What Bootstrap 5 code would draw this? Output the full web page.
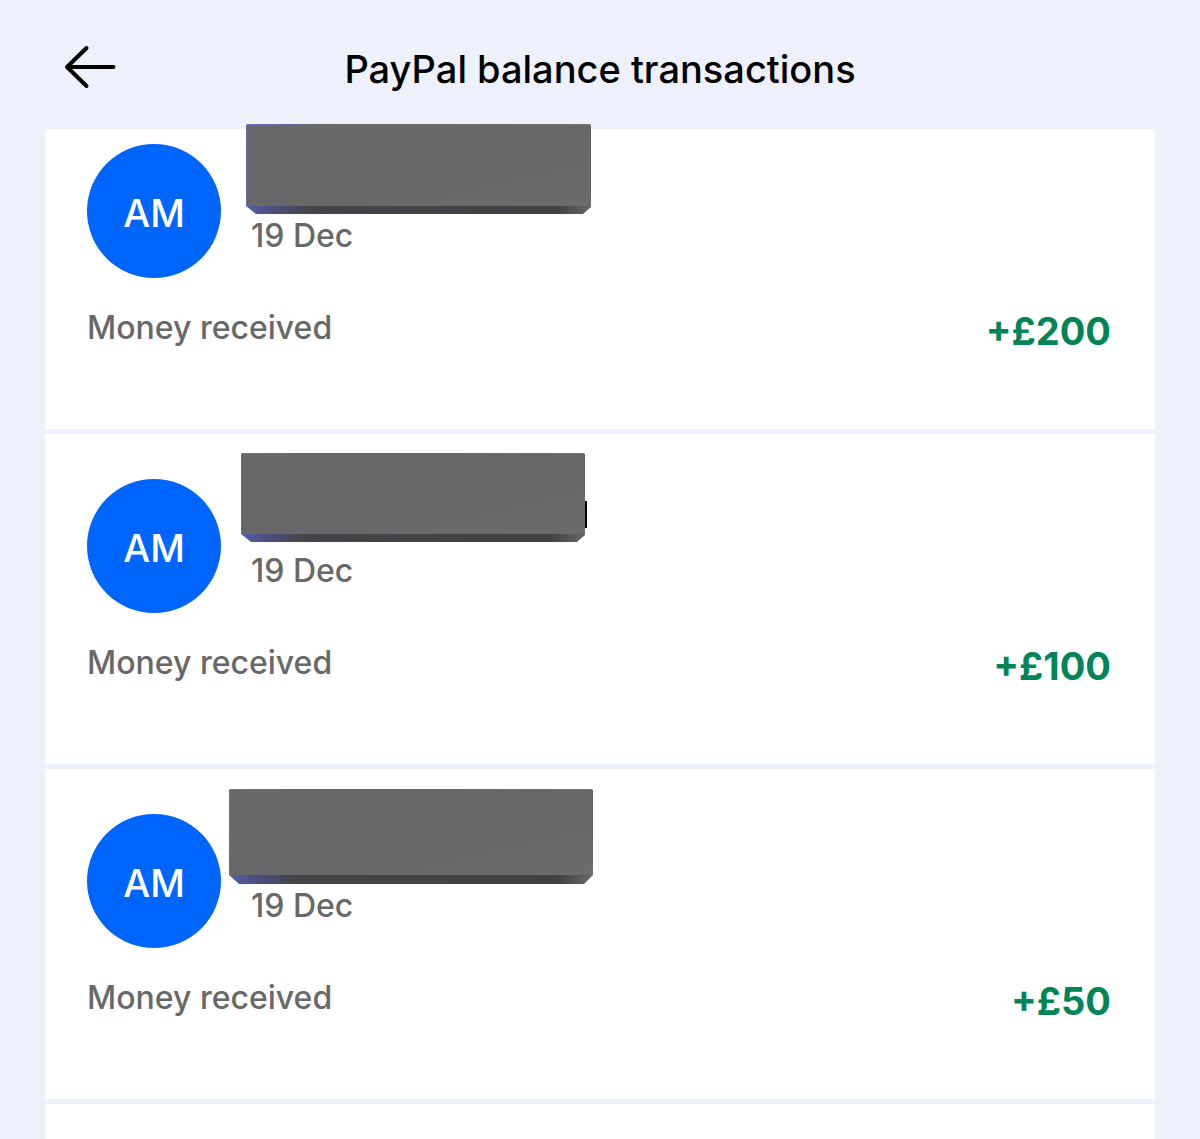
<!DOCTYPE html>
<html lang="en-GB">
<head>
<meta charset="utf-8">
<meta name="viewport" content="width=device-width, initial-scale=1">
<title>PayPal balance transactions</title>
<link rel="stylesheet" href="https://cdn.jsdelivr.net/npm/bootstrap@5.3.0/dist/css/bootstrap.min.css">
<style>
  body { background: #eef1fb; color: #000; font-family: Inter, "Liberation Sans", sans-serif; font-weight: 450; }
  .screen { min-height: 100vh; padding: 0 45px; }
  .topbar { display: grid; grid-template-columns: 60px 1fr 60px; height: 129px; padding: 0 12px; }
  .back-btn { width: 60px; height: 60px; margin-top: 37px; }
  .page-title { font-size: 38px; font-weight: 450; line-height: 48px; margin-top: 45px; }
  .tx-list { gap: 5px; }
  .tx { background: #fff; padding: 45px 44px 75px 42px; }
  .tx:first-child { padding-top: 15px; border-radius: 6px 6px 0 0; }
  .tx-next { min-height: 35px; padding: 0; }
  .avatar { width: 134px; height: 134px; background: #0066fb; font-size: 38px; line-height: 48px; padding-top: 4px; }
  .tx-head { gap: 30px; }
  .tx-date { font-size: 32px; line-height: 40px; color: #686868; padding-bottom: 22px; }
  .tx-foot { margin-top: 28px; line-height: 48px; }
  .tx-kind { font-size: 32px; line-height: 44px; color: #686868; }
  .tx-sum { font-size: 38px; line-height: 50px; margin-bottom: -2px; color: #018557; }
  /* Opaque bars that lie over the sender's name */
  .cover { position: absolute; overflow: visible; }
  .cover-a { left: 201px; top: -5px; }
  .cover-b { left: 196px; top: 18px; }
  .cover-c { left: 184px; top: 20px; }
</style>
<script src="https://cdn.jsdelivr.net/npm/bootstrap@5.3.0/dist/js/bootstrap.bundle.min.js"></script>
</head>
<body>
<svg width="0" height="0" class="position-absolute" aria-hidden="true">
  <defs>
    <linearGradient id="face" x1="0" y1="0" x2="1" y2="1">
      <stop offset="0" stop-color="#69696a"/><stop offset=".5" stop-color="#676769"/><stop offset="1" stop-color="#6b6b6d"/>
    </linearGradient>
    <linearGradient id="edge">
      <stop offset="0" stop-color="#5360a8"/><stop offset=".07" stop-color="#4b5083"/><stop offset=".18" stop-color="#454549"/><stop offset=".9" stop-color="#414144"/><stop offset="1" stop-color="#68686a"/>
    </linearGradient>
    <linearGradient id="shine">
      <stop offset="0" stop-color="#6670c0"/><stop offset=".12" stop-color="#6269a0"/><stop offset=".2" stop-color="#606062"/><stop offset="1" stop-color="#747476"/>
    </linearGradient>
  </defs>
</svg>
<div class="screen d-flex flex-column">
  <header class="topbar">
    <button type="button" class="btn back-btn border-0 p-0 d-flex justify-content-center align-items-center" aria-label="Back">
      <svg width="60" height="60" viewBox="0 0 60 60" fill="none" stroke="#000" stroke-width="4" stroke-linecap="round" stroke-linejoin="round" aria-hidden="true"><path d="M29.500 11 10 30 29.500 49M10 30H56.500"/></svg>
    </button>
    <h1 class="page-title text-center mb-0 text-nowrap">PayPal balance transactions</h1>
  </header>
  <main class="tx-list d-flex flex-column flex-grow-1">
    <article class="tx position-relative">
      <div class="tx-head d-flex align-items-end">
        <div class="avatar rounded-circle text-white d-flex align-items-center justify-content-center">AM</div>
        <div class="tx-date">19 Dec</div>
      </div>
      <div class="tx-foot d-flex justify-content-between align-items-start">
        <span class="tx-kind">Money received</span><span class="tx-sum fw-bold">+£200</span>
      </div>
      <svg class="cover cover-a" width="345" height="91" aria-hidden="true">
        <path fill="url(#edge)" d="M0 80H345V83L337 90H10L0 82Z"/>
        <path fill="url(#face)" d="M0 2Q0 0 2 0H343Q345 0 345 2V82H0Z"/>
        <rect width="343" height="1" x="1" fill="url(#shine)"/><rect width="1" height="80" y="1" fill="#6269a8"/>
      </svg>
    </article>
    <article class="tx position-relative">
      <div class="tx-head d-flex align-items-end">
        <div class="avatar rounded-circle text-white d-flex align-items-center justify-content-center">AM</div>
        <div class="tx-date">19 Dec</div>
      </div>
      <div class="tx-foot d-flex justify-content-between align-items-start">
        <span class="tx-kind">Money received</span><span class="tx-sum fw-bold">+£100</span>
      </div>
      <svg class="cover cover-b" width="346" height="91" aria-hidden="true">
        <path fill="#000" d="M343 49H346V76H343Z"/>
        <path fill="url(#edge)" d="M0 80H344V83L336 90H10L0 82Z"/>
        <path fill="url(#face)" d="M0 3Q0 1 2 1H342Q344 1 344 3V82H0Z"/>
        <rect width="342" height="1" x="1" y="1" fill="url(#shine)"/><rect width="1" height="80" y="2" fill="#6269a8"/>
      </svg>
    </article>
    <article class="tx position-relative">
      <div class="tx-head d-flex align-items-end">
        <div class="avatar rounded-circle text-white d-flex align-items-center justify-content-center">AM</div>
        <div class="tx-date">19 Dec</div>
      </div>
      <div class="tx-foot d-flex justify-content-between align-items-start">
        <span class="tx-kind">Money received</span><span class="tx-sum fw-bold">+£50</span>
      </div>
      <svg class="cover cover-c" width="364" height="95" aria-hidden="true">
        <path fill="url(#edge)" d="M0 84H364V86L355 95H10L0 86Z"/>
        <path fill="url(#face)" d="M0 2Q0 0 2 0H362Q364 0 364 2V86H0Z"/>
        <rect width="362" height="1" x="1" fill="url(#shine)"/><rect width="1" height="84" y="1" fill="#6269a8"/>
      </svg>
    </article>
    <div class="tx tx-next flex-grow-1"></div>
  </main>
</div>
</body>
</html>
